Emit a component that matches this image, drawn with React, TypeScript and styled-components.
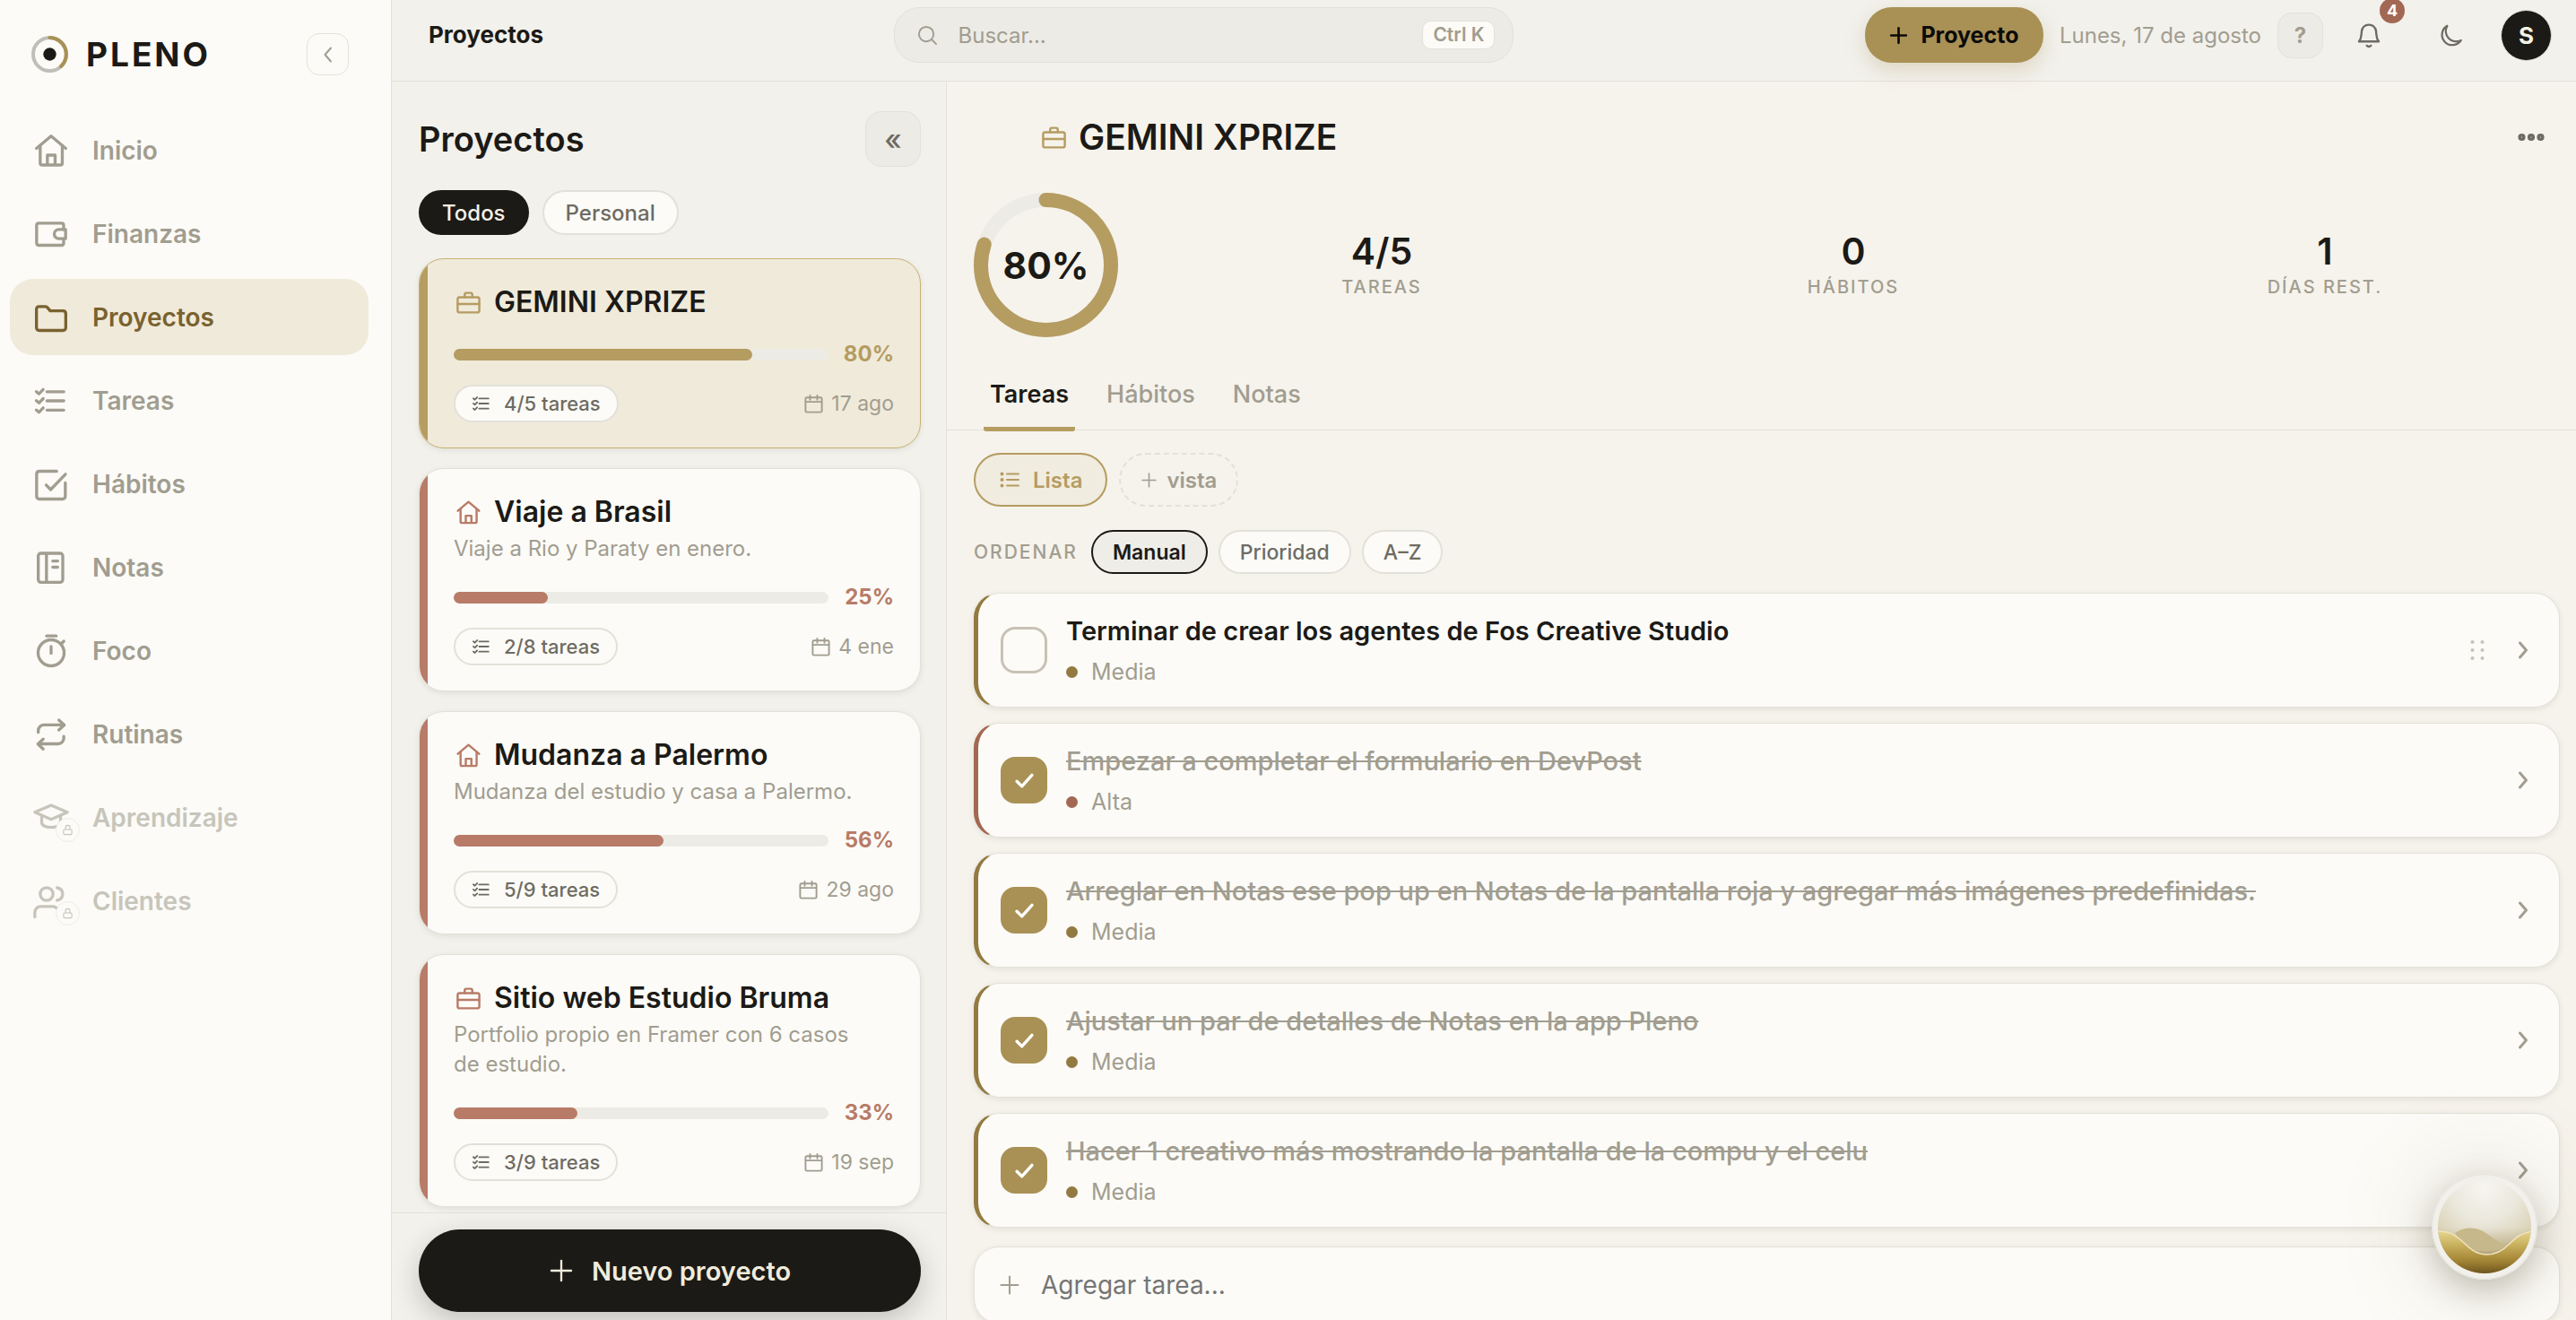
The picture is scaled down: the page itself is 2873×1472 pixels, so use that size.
import React, { useState } from "react";
import styled, { createGlobalStyle, css } from "styled-components";

const c = {
  ink: "#1c1a16",
  soft: "#6e6b62",
  muted: "#a19d90",
  line: "#e2e1d9",
  paper: "#fcfbf7",
  bar: "#f2f1ec",
  canvas: "#f6f3ec",
  well: "#edebe5",
  gold: "#a99155",
  sand: "#b59c61",
  bronze: "#927a41",
  clay: "#b87b67",
  brick: "#a26853",
};

const GlobalStyle = createGlobalStyle`
  *, *::before, *::after { box-sizing: border-box; }
  body { margin: 0; background: ${c.canvas}; color: ${c.ink}; font-family: Inter, "Noto Sans", sans-serif; }
  button, input { font-family: inherit; color: inherit; margin: 0; }
  button { cursor: pointer; border: 0; background: none; padding: 0; }
  h1, h2, h3, p, ul, dl, dd { margin: 0; padding: 0; }
  ul { list-style: none; }
`;

/* ---------- icons ---------- */

type IconName = keyof typeof shapes;

const shapes = {
  home: (
    <>
      <path d="M2.2 10.5 12 2.2l9.8 8.3" />
      <path d="M4.7 8.8v11.4c0 .8.6 1.4 1.4 1.4h12c.8 0 1.4-.6 1.4-1.4V8.8" />
      <path d="M9.5 21.3V15h5.2v6.3" />
    </>
  ),
  wallet: (
    <>
      <path d="M20.4 9V6.2c0-.9-.6-1.5-1.5-1.5H3.8c-.9 0-1.5.6-1.5 1.5v11.8c0 .9.6 1.5 1.5 1.5h15.1c.9 0 1.5-.6 1.5-1.5v-2.7" />
      <path d="M21.7 8.9h-4.5a3.1 3.1 0 0 0 0 6.2h4.5z" />
    </>
  ),
  folder: (
    <path d="M2.2 6.5c0-1 .7-1.8 1.8-1.8h4.3c.5 0 .9.2 1.2.6l1.900 2.300h8.500c1.100 0 1.900.8 1.900 1.900v9.300c0 1.100-.8 1.900-1.900 1.900H4.100c-1.100 0-1.900-.8-1.900-1.900z" />
  ),
  tasks: (
    <>
      <path d="M9.2 5.9h11.3M9.2 12h11.3M9.2 18.2h11.3" />
      <path d="m2.1 5.8 1.8 1.5 2.8-2.9M2.1 11.9l1.8 1.5 2.8-2.9M2.1 18.1l1.8 1.5 2.8-2.9" />
    </>
  ),
  habit: (
    <>
      <path d="M15.7 3.3H4.2c-1.1 0-1.9.8-1.9 1.9v14.8c0 1.1.8 1.9 1.9 1.9h15.4c1.1 0 1.9-.8 1.9-1.9v-9" />
      <path d="m8.7 12.5 3 3.1L21.6 5.3" />
    </>
  ),
  notebook: (
    <>
      <rect x="3.4" y="2.4" width="16.4" height="19.4" rx="1.8" />
      <path d="M8.9 2.6v19M13.1 7.6h3.3M13.1 11.7h3.3" />
    </>
  ),
  timer: (
    <>
      <circle cx="12" cy="13.2" r="8.7" />
      <path d="M9 1.9h6.4M12 9v4.5M18.8 7.2l1.7-1.8" />
    </>
  ),
  repeat: (
    <>
      <path d="m17.2 2.4 3.6 3.3L17.2 9" />
      <path d="M3.4 10.6V9.5c0-2.2 1.7-3.9 3.9-3.9h13.3" />
      <path d="m6.7 15.1-3.5 3.3 3.5 3.3" />
      <path d="M20.5 13.3v1.1c0 2.2-1.7 3.9-3.9 3.9H3.4" />
    </>
  ),
  cap: (
    <>
      <path d="M12 3.6 22.9 8.2 12 13 1.1 8.2z" />
      <path d="M5.7 10.4v4.7c0 2 3 3.3 6.3 3.3s6.3-1.3 6.3-3.3v-4.7" />
    </>
  ),
  users: (
    <>
      <circle cx="9" cy="7.2" r="4.3" />
      <path d="M16 3c2.3.4 3.7 2.1 3.7 4.2s-1.4 3.8-3.7 4.2" />
      <path d="M1.1 22.5v-3c0-2.3 1.8-4 4-4h7.8c2.2 0 4 1.7 4 4v3" />
    </>
  ),
  lock: (
    <>
      <rect x="3.5" y="11" width="17" height="10.5" rx="2" />
      <path d="M7.5 11V7a4.5 4.5 0 0 1 9 0v4" />
    </>
  ),
  briefcase: (
    <>
      <rect x="2" y="7" width="20" height="14" rx="1.8" />
      <path d="M8.5 6.8V4.5C8.5 3.6 9.2 3 10 3h4c.8 0 1.5.6 1.5 1.5v2.3M2.2 13.3h19.6" />
    </>
  ),
  calendar: (
    <>
      <rect x="2.5" y="4.5" width="19" height="17" rx="1.5" />
      <path d="M2.8 9.5h18.4M7.8 2v5M16.2 2v5" />
    </>
  ),
  list: (
    <>
      <path d="M9 5.5h13M9 12h13M9 18.5h13" />
      <g fill="currentColor">
        <circle cx="3.5" cy="5.5" r="1" />
        <circle cx="3.5" cy="12" r="1" />
        <circle cx="3.5" cy="18.5" r="1" />
      </g>
    </>
  ),
  plus: <path d="M12 2.5v19M2.5 12h19" />,
  search: (
    <>
      <circle cx="10.5" cy="10.5" r="8.5" />
      <path d="m17 17 5 5" />
    </>
  ),
  bell: (
    <>
      <path d="M2.5 18.2c1.5-1.7 2.1-3.5 2.3-6.3l.3-3.2C5.500 4.700 8.300 2.200 12 2.200s6.500 2.500 6.900 6.500l.3 3.200c.2 2.800.8 4.600 2.300 6.300z" />
      <path d="M10 22.2c1.1 1 2.9 1 4 0" />
    </>
  ),
  moon: <path d="M8.3 2.5A10.2 10.2 0 1 0 22 16.8 10.3 10.3 0 0 1 8.3 2.5z" />,
  left: <path d="M15 4.5 8.5 12l6.5 7.5" />,
  right: <path d="m8.5 4 7 8-7 8" />,
  check: <path d="m4.5 12.7 5 5L19.5 6.5" />,
  dots: (
    <>
      <circle cx="3" cy="12" r="2" />
      <circle cx="12" cy="12" r="2" />
      <circle cx="21" cy="12" r="2" />
    </>
  ),
  grip: (
    <g fill="currentColor" stroke="none">
      <circle cx="6.5" cy="3" r="2" />
      <circle cx="6.5" cy="12" r="2" />
      <circle cx="6.5" cy="21" r="2" />
      <circle cx="17.5" cy="3" r="2" />
      <circle cx="17.5" cy="12" r="2" />
      <circle cx="17.5" cy="21" r="2" />
    </g>
  ),
};

const Svg = styled.svg<{ $size: number }>`
  width: ${(p) => p.$size}px;
  height: ${(p) => p.$size}px;
  flex: none;
  display: block;
  overflow: visible;
  fill: none;
  stroke: currentColor;
  stroke-linecap: round;
  stroke-linejoin: round;
`;

function Icon({ name, size, weight = 2 }: { name: IconName; size: number; weight?: number }) {
  return (
    <Svg $size={size} viewBox="0 0 24 24" strokeWidth={weight} aria-hidden="true">
      {shapes[name]}
    </Svg>
  );
}

/* ---------- shell ---------- */

const Shell = styled.div`
  display: grid;
  grid-template-columns: 437px minmax(0, 1fr);
  grid-template-rows: minmax(0, 1fr);
  height: 100vh;
  overflow: hidden;
`;

const Sidebar = styled.aside`
  background: ${c.paper};
  border-right: 1px solid ${c.line};
  padding: 37px 25px 0 11px;
`;

const Brand = styled.div`
  display: flex;
  align-items: center;
  gap: 20px;
  padding: 0 22px 0 24px;
  margin-bottom: 41px;
`;

const BrandName = styled.span`
  flex: 1;
  font-size: 37px;
  line-height: 44px;
  font-weight: 700;
  letter-spacing: 3px;
`;

const Collapse = styled.button`
  display: grid;
  place-items: center;
  width: 47px;
  height: 47px;
  border: 1px solid ${c.line};
  border-radius: 14px;
  color: ${c.muted};
`;

const NavList = styled.ul`
  display: grid;
  gap: 8px;
`;

const NavLink = styled.a<{ $active?: boolean; $locked?: boolean }>`
  display: flex;
  align-items: center;
  gap: 26px;
  height: 85px;
  padding: 0 26px;
  border-radius: 26px;
  font-size: 28px;
  font-weight: 600;
  text-decoration: none;
  color: ${(p) => (p.$active ? "#79622f" : p.$locked ? "#c7c5bb" : c.muted)};
  background: ${(p) => (p.$active ? "#f0eada" : "transparent")};
`;

const NavIcon = styled.span`
  position: relative;
`;

const LockBadge = styled.span`
  position: absolute;
  right: -12px;
  bottom: -7px;
  display: grid;
  place-items: center;
  width: 27px;
  height: 27px;
  border-radius: 50%;
  border: 1px solid #edece7;
  background: ${c.paper};
`;

const Main = styled.div`
  display: grid;
  grid-template-rows: 91px minmax(0, 1fr);
  min-width: 0;
  min-height: 0;
`;

/* ---------- top bar ---------- */

const TopBar = styled.header`
  display: flex;
  align-items: center;
  justify-content: space-between;
  padding: 0 27px 12px 41px;
  background: ${c.bar};
  border-bottom: 1px solid ${c.line};
`;

const PageName = styled.h1`
  font-size: 26px;
  line-height: 32px;
  font-weight: 700;
`;

const Search = styled.label`
  display: flex;
  align-items: center;
  gap: 20px;
  width: 691px;
  height: 62px;
  padding: 0 20px 0 25px;
  border: 1px solid ${c.line};
  border-radius: 28px;
  background: ${c.well};
  color: ${c.muted};
`;

const SearchInput = styled.input`
  flex: 1;
  min-width: 0;
  border: 0;
  outline: 0;
  background: none;
  font-size: 24px;
  &::placeholder {
    color: ${c.muted};
    opacity: 1;
  }
`;

const Key = styled.kbd`
  padding: 0 11px;
  border: 1px solid ${c.line};
  border-radius: 10px;
  background: ${c.paper};
  font-family: inherit;
  font-size: 21px;
  line-height: 30px;
  font-weight: 600;
`;

const Tools = styled.div`
  display: flex;
  align-items: center;
  gap: 18px;
`;

const CreateButton = styled.button`
  display: flex;
  align-items: center;
  justify-content: center;
  gap: 14px;
  width: 199px;
  height: 62px;
  border-radius: 30px;
  background: ${c.gold};
  color: #0c0b09;
  font-size: 25px;
  font-weight: 700;
  box-shadow: 0 8px 22px rgba(169, 145, 85, 0.28);
`;

const Today = styled.time`
  font-size: 24px;
  color: ${c.muted};
`;

const ToolButton = styled.button<{ $boxed?: boolean }>`
  position: relative;
  display: grid;
  place-items: center;
  width: 51px;
  height: 51px;
  border-radius: 16px;
  color: ${c.soft};
  font-size: 24px;
  font-weight: 700;
  ${(p) =>
    p.$boxed &&
    css`
      border: 1px solid ${c.line};
      background: ${c.well};
      color: ${c.muted};
    `}
`;

const IconTools = styled.div`
  display: flex;
  align-items: center;
  gap: 41px;
  margin: 0 12px 0 7px;
`;

const Count = styled.span`
  position: absolute;
  right: -15px;
  top: -16px;
  width: 28px;
  height: 28px;
  border-radius: 50%;
  background: ${c.brick};
  color: #fff;
  font-size: 18px;
  line-height: 28px;
  text-align: center;
`;

const Avatar = styled.button`
  width: 57px;
  height: 57px;
  border-radius: 50%;
  border: 1px solid ${c.line};
  background: ${c.ink};
  color: #f5f2e6;
  font-size: 26px;
  font-weight: 700;
`;

/* ---------- project column ---------- */

const Body = styled.div`
  display: grid;
  grid-template-columns: 619px minmax(0, 1fr);
  grid-template-rows: minmax(0, 1fr);
  min-height: 0;
`;

const Column = styled.section`
  display: flex;
  flex-direction: column;
  min-height: 0;
  background: ${c.bar};
  border-right: 1px solid ${c.line};
`;

const ColumnHead = styled.div`
  display: flex;
  align-items: center;
  justify-content: space-between;
  padding: 33px 28px 26px 30px;
`;

const ColumnTitle = styled.h2`
  font-size: 38px;
  line-height: 48px;
  font-weight: 600;
`;

const FoldButton = styled.button`
  width: 62px;
  height: 62px;
  border: 1px solid ${c.line};
  border-radius: 18px;
  background: ${c.well};
  color: ${c.soft};
  font-size: 32px;
  font-weight: 500;
`;

const Filters = styled.div`
  display: flex;
  gap: 15px;
  padding: 0 30px 26px;
`;

const Filter = styled.button<{ $on?: boolean }>`
  height: 50px;
  padding: 0 24px;
  border-radius: 25px;
  border: 2px solid ${(p) => (p.$on ? c.ink : c.line)};
  background: ${(p) => (p.$on ? c.ink : c.paper)};
  color: ${(p) => (p.$on ? "#f5f2e6" : c.soft)};
  font-size: 24px;
  font-weight: 500;
`;

const Cards = styled.ul`
  flex: 1;
  min-height: 0;
  overflow: hidden;
  display: flex;
  flex-direction: column;
  gap: 22px;
  padding: 0 28px 0 30px;
`;

const Card = styled.li<{ $tone: string; $active?: boolean }>`
  position: relative;
  flex: none;
  overflow: hidden;
  padding: 28px 29px 28px 38px;
  border: 1px solid ${(p) => (p.$active ? "#c6b171" : c.line)};
  border-radius: 28px;
  background: ${(p) => (p.$active ? "#f0eada" : c.paper)};
  box-shadow: 0 2px 6px rgba(60, 55, 40, 0.1);
  &::before {
    content: "";
    position: absolute;
    inset: 0 auto 0 0;
    width: 9px;
    background: ${(p) => p.$tone};
  }
`;

const CardTitle = styled.h3<{ $tone: string }>`
  display: flex;
  align-items: center;
  gap: 14px;
  padding-left: 2px;
  font-size: 32px;
  line-height: 40px;
  font-weight: 600;
  svg {
    color: ${(p) => p.$tone};
  }
`;

const CardNote = styled.p`
  margin-top: 4px;
  padding-right: 20px;
  font-size: 24px;
  line-height: 33px;
  color: ${c.muted};
`;

const Progress = styled.div<{ $tone: string }>`
  display: flex;
  align-items: center;
  gap: 18px;
  margin-top: 22px;
  font-size: 24px;
  line-height: 32px;
  font-weight: 700;
  color: ${(p) => p.$tone};
`;

const Track = styled.div`
  flex: 1;
  height: 13px;
  border-radius: 7px;
  background: ${c.well};
`;

const Fill = styled.div`
  height: 100%;
  border-radius: 7px;
  background: currentColor;
`;

const CardFoot = styled.div`
  display: flex;
  align-items: center;
  justify-content: space-between;
  margin-top: 18px;
`;

const TaskCount = styled.span`
  display: flex;
  align-items: center;
  gap: 14px;
  height: 42px;
  padding: 0 18px;
  border: 2px solid ${c.line};
  border-radius: 21px;
  background: ${c.paper};
  color: ${c.soft};
  font-size: 22px;
  font-weight: 500;
`;

const Due = styled.span`
  display: flex;
  align-items: center;
  gap: 8px;
  font-size: 23px;
  color: ${c.muted};
`;

const ColumnFoot = styled.div`
  padding: 18px 28px 9px 30px;
  border-top: 1px solid ${c.line};
`;

const NewProject = styled.button`
  display: flex;
  align-items: center;
  justify-content: center;
  gap: 20px;
  width: 100%;
  height: 92px;
  border-radius: 46px;
  background: ${c.ink};
  color: #f0ecdc;
  font-size: 29px;
  font-weight: 600;
  box-shadow: 0 10px 30px rgba(28, 26, 22, 0.22);
`;

/* ---------- project detail ---------- */

const Detail = styled.main`
  display: flex;
  flex-direction: column;
  min-width: 0;
  min-height: 0;
  overflow: hidden;
  & > * {
    flex: none;
  }
`;

const DetailHead = styled.div`
  display: flex;
  align-items: center;
  gap: 13px;
  padding: 36px 36px 0 105px;
  color: ${c.sand};
`;

const DetailTitle = styled.h2`
  flex: 1;
  font-size: 39px;
  line-height: 52px;
  font-weight: 600;
  color: ${c.ink};
`;

const MoreButton = styled.button`
  color: ${c.soft};
`;

const Summary = styled.div`
  display: grid;
  grid-template-columns: 161px minmax(0, 1fr);
  gap: 31px;
  align-items: center;
  padding: 36px 17px 0 30px;
`;

const Ring = styled.div`
  display: grid;
  place-items: center;
  & > * {
    grid-area: 1 / 1;
  }
`;

const RingValue = styled.strong`
  font-size: 41px;
  line-height: 48px;
  font-weight: 700;
`;

const Stats = styled.dl`
  display: grid;
  grid-template-columns: repeat(3, minmax(0, 1fr));
  padding-bottom: 4px;
  text-align: center;
`;

const Stat = styled.div`
  display: flex;
  flex-direction: column-reverse;
`;

const StatLabel = styled.dt`
  font-size: 20px;
  line-height: 28px;
  font-weight: 500;
  letter-spacing: 2px;
  color: ${c.muted};
`;

const StatValue = styled.dd`
  font-size: 41px;
  line-height: 52px;
  font-weight: 600;
`;

const Tabs = styled.div`
  display: flex;
  gap: 28px;
  margin-top: 28px;
  padding: 0 41px;
  border-bottom: 1px solid ${c.line};
`;

const Tab = styled.button<{ $on?: boolean }>`
  height: 77px;
  margin-bottom: -2px;
  padding: 0 7px 1px;
  border-bottom: 5px solid ${(p) => (p.$on ? c.sand : "transparent")};
  border-radius: 3px;
  font-size: 27px;
  font-weight: ${(p) => (p.$on ? 600 : 500)};
  color: ${(p) => (p.$on ? c.ink : c.muted)};
`;

const Views = styled.div`
  display: flex;
  gap: 13px;
  padding: 25px 30px 0;
`;

const View = styled.button<{ $on?: boolean }>`
  display: flex;
  align-items: center;
  gap: ${(p) => (p.$on ? 14 : 10)}px;
  height: 60px;
  padding: 0 ${(p) => (p.$on ? 26 : 22)}px;
  border-radius: 30px;
  border: 2px ${(p) => (p.$on ? `solid ${c.sand}` : `dashed ${c.line}`)};
  background: ${(p) => (p.$on ? "#f1ece0" : "transparent")};
  color: ${(p) => (p.$on ? c.sand : c.muted)};
  font-size: 24px;
  font-weight: 600;
`;

const Sort = styled.div`
  display: flex;
  align-items: center;
  gap: 12px;
  padding: 26px 30px 0;
`;

const SortLabel = styled.span`
  padding-right: 3px;
  font-size: 21px;
  font-weight: 500;
  letter-spacing: 2px;
  color: ${c.muted};
`;

const SortButton = styled.button<{ $on?: boolean }>`
  height: 49px;
  padding: 0 22px;
  border: 2px solid ${(p) => (p.$on ? c.ink : c.line)};
  border-radius: 25px;
  background: ${(p) => (p.$on ? "#efede7" : c.paper)};
  color: ${(p) => (p.$on ? c.ink : c.soft)};
  font-size: 23px;
  font-weight: ${(p) => (p.$on ? 600 : 500)};
`;

const Tasks = styled.ul`
  display: grid;
  gap: 17px;
  padding: 21px 18px 0 30px;
`;

const Task = styled.li<{ $tone: string }>`
  display: flex;
  align-items: center;
  gap: 21px;
  height: 128px;
  padding: 0 28px 0 25px;
  border: 1px solid ${c.line};
  border-left: 5px solid ${(p) => p.$tone};
  border-radius: 28px;
  background: ${c.paper};
  box-shadow: 0 2px 6px rgba(60, 55, 40, 0.1);
`;

const Tick = styled.span`
  display: grid;
  place-items: center;
  color: #fff;
  & > * {
    grid-area: 1 / 1;
  }
  svg {
    pointer-events: none;
  }
`;

const TickBox = styled.input`
  appearance: none;
  width: 52px;
  height: 52px;
  border: 3px solid #c8c2b5;
  border-radius: 16px;
  background: ${c.paper};
  &:checked {
    border-color: ${c.gold};
    background: ${c.gold};
  }
`;

const TaskText = styled.div`
  flex: 1;
  min-width: 0;
`;

const TaskName = styled.label<{ $done?: boolean }>`
  display: block;
  font-size: 29px;
  line-height: 38px;
  font-weight: ${(p) => (p.$done ? 500 : 600)};
  color: ${(p) => (p.$done ? c.muted : c.ink)};
  text-decoration: ${(p) => (p.$done ? "line-through" : "none")};
`;

const Priority = styled.p<{ $tone: string }>`
  display: flex;
  align-items: center;
  gap: 15px;
  margin-top: 10px;
  font-size: 25px;
  line-height: 32px;
  color: ${c.muted};
  &::before {
    content: "";
    width: 13px;
    height: 13px;
    border-radius: 50%;
    background: ${(p) => p.$tone};
  }
`;

const RowActions = styled.div`
  display: flex;
  align-items: center;
  gap: 27px;
`;

const RowButton = styled.button<{ $faint?: boolean }>`
  color: ${(p) => (p.$faint ? "#c6c3b7" : c.muted)};
`;

const AddTask = styled.label`
  display: flex;
  align-items: center;
  gap: 21px;
  height: 86px;
  margin: 21px 18px 0 30px;
  padding: 0 27px;
  border: 1px solid ${c.line};
  border-radius: 28px;
  background: ${c.paper};
  color: ${c.muted};
  box-shadow: 0 2px 6px rgba(60, 55, 40, 0.1);
`;

const AddInput = styled.input`
  flex: 1;
  border: 0;
  outline: 0;
  background: none;
  font-size: 28px;
  &::placeholder {
    color: #757575;
    opacity: 1;
  }
`;

const Orb = styled.button`
  position: fixed;
  right: 43px;
  bottom: 45px;
  width: 118px;
  height: 118px;
  border-radius: 50%;
  box-shadow: 0 12px 36px rgba(70, 60, 35, 0.28), 0 0 110px rgba(120, 110, 70, 0.22);
`;

/* ---------- data ---------- */

const nav: { icon: IconName; label: string; active?: boolean; locked?: boolean }[] = [
  { icon: "home", label: "Inicio" },
  { icon: "wallet", label: "Finanzas" },
  { icon: "folder", label: "Proyectos", active: true },
  { icon: "tasks", label: "Tareas" },
  { icon: "habit", label: "Hábitos" },
  { icon: "notebook", label: "Notas" },
  { icon: "timer", label: "Foco" },
  { icon: "repeat", label: "Rutinas" },
  { icon: "cap", label: "Aprendizaje", locked: true },
  { icon: "users", label: "Clientes", locked: true },
];

const projects: {
  icon: IconName;
  name: string;
  note?: string;
  done: number;
  total: number;
  due: string;
  tone: string;
  active?: boolean;
}[] = [
  { icon: "briefcase", name: "GEMINI XPRIZE", done: 4, total: 5, due: "17 ago", tone: c.sand, active: true },
  { icon: "home", name: "Viaje a Brasil", note: "Viaje a Rio y Paraty en enero.", done: 2, total: 8, due: "4 ene", tone: c.clay },
  { icon: "home", name: "Mudanza a Palermo", note: "Mudanza del estudio y casa a Palermo.", done: 5, total: 9, due: "29 ago", tone: c.clay },
  { icon: "briefcase", name: "Sitio web Estudio Bruma", note: "Portfolio propio en Framer con 6 casos de estudio.", done: 3, total: 9, due: "19 sep", tone: c.clay },
];

const initialTasks = [
  { name: "Terminar de crear los agentes de Fos Creative Studio", priority: "Media", done: false },
  { name: "Empezar a completar el formulario en DevPost", priority: "Alta", done: true },
  { name: "Arreglar en Notas ese pop up en Notas de la pantalla roja y agregar más imágenes predefinidas.", priority: "Media", done: true },
  { name: "Ajustar un par de detalles de Notas en la app Pleno", priority: "Media", done: true },
  { name: "Hacer 1 creativo más mostrando la pantalla de la compu y el celu", priority: "Media", done: true },
];

const stats = [
  { value: "4/5", label: "TAREAS" },
  { value: "0", label: "HÁBITOS" },
  { value: "1", label: "DÍAS REST." },
];

/* ---------- pieces ---------- */

function Logo() {
  return (
    <Svg $size={41} viewBox="0 0 41 41" strokeWidth={4} aria-hidden="true">
      <circle cx="20.5" cy="20.5" r="18.5" stroke="#bfbeb8" />
      <path d="M20.5 2a18.5 18.5 0 0 1 12.5 32" stroke={c.gold} />
      <circle cx="20.5" cy="20.5" r="7.2" fill={c.ink} stroke="none" />
    </Svg>
  );
}

function ProjectCard({ project }: { project: (typeof projects)[number] }) {
  const percent = Math.round((project.done / project.total) * 100);
  return (
    <Card $tone={project.tone} $active={project.active}>
      <CardTitle $tone={project.tone}>
        <Icon name={project.icon} size={29} />
        {project.name}
      </CardTitle>
      {project.note && <CardNote>{project.note}</CardNote>}
      <Progress $tone={project.tone}>
        <Track role="progressbar" aria-label={project.name} aria-valuenow={percent}>
          <Fill style={{ width: `${percent}%` }} />
        </Track>
        {percent}%
      </Progress>
      <CardFoot>
        <TaskCount>
          <Icon name="tasks" size={22} />
          {project.done}/{project.total} tareas
        </TaskCount>
        <Due>
          <Icon name="calendar" size={23} />
          {project.due}
        </Due>
      </CardFoot>
    </Card>
  );
}

function CompletionRing() {
  const length = 2 * Math.PI * 72.5;
  return (
    <Ring>
      <Svg $size={161} viewBox="0 0 161 161" strokeWidth={16} aria-hidden="true">
        <circle cx="80.5" cy="80.5" r="72.5" stroke={c.well} />
        <circle
          cx="80.5"
          cy="80.5"
          r="72.5"
          stroke={c.sand}
          strokeDasharray={`${length * 0.8} ${length}`}
          transform="rotate(-90 80.5 80.5)"
        />
      </Svg>
      <RingValue>80%</RingValue>
    </Ring>
  );
}

function OrbDrawing() {
  return (
    <Svg $size={118} viewBox="0 0 118 118" aria-hidden="true">
      <defs>
        <radialGradient id="glass" cx="50%" cy="8%" r="75%">
          <stop offset="0" stopColor="#f7f5f0" />
          <stop offset="0.5" stopColor="#eae7db" />
          <stop offset="1" stopColor="#d6ccac" />
        </radialGradient>
        <linearGradient id="liquid" x1="0" y1="0" x2="0" y2="1">
          <stop offset="0" stopColor="#e6d590" />
          <stop offset="0.3" stopColor="#c8b05d" />
          <stop offset="0.65" stopColor="#a18233" />
          <stop offset="1" stopColor="#5c4519" />
        </linearGradient>
        <linearGradient id="shade" x1="0" y1="0" x2="0" y2="1">
          <stop offset="0" stopColor="#a99765" stopOpacity="0" />
          <stop offset="1" stopColor="#9b8755" stopOpacity="0.7" />
        </linearGradient>
        <clipPath id="bowl">
          <circle cx="59" cy="59" r="52" />
        </clipPath>
      </defs>
      <circle cx="59" cy="59" r="58.5" fill="#f2f0eb" stroke="#e3e0d8" strokeWidth="1" />
      <g clipPath="url(#bowl)" stroke="none">
        <rect x="7" y="7" width="104" height="104" fill="url(#glass)" />
        <rect x="7" y="60" width="104" height="34" fill="url(#shade)" />
        <path d="M26 66C36 59 48 59 57 64s16 12 26 16c-10 9-40 9-50-3z" fill="#c6b88a" />
        <path
          d="M6 64c13-1 20 4 29 12 9 9 16 14 27 14 11 0 18-5 25-12 8-8 13-12 25-14v52H6z"
          fill="url(#liquid)"
        />
        <path
          d="M6 64c13-1 20 4 29 12 9 9 16 14 27 14 11 0 18-5 25-12 8-8 13-12 25-14"
          fill="none"
          stroke="#efe3bd"
          strokeWidth="1.5"
        />
      </g>
    </Svg>
  );
}

export default function App() {
  const [tasks, setTasks] = useState(initialTasks);
  const toggle = (index: number) =>
    setTasks((all) => all.map((t, i) => (i === index ? { ...t, done: !t.done } : t)));

  return (
    <Shell>
      <GlobalStyle />
      <Sidebar>
        <Brand>
          <Logo />
          <BrandName>PLENO</BrandName>
          <Collapse aria-label="Contraer menú">
            <Icon name="left" size={24} />
          </Collapse>
        </Brand>
        <nav aria-label="Principal">
          <NavList>
            {nav.map((item) => (
              <li key={item.label}>
                <NavLink href="#" $active={item.active} $locked={item.locked}>
                  <NavIcon>
                    <Icon name={item.icon} size={40} />
                    {item.locked && (
                      <LockBadge>
                        <Icon name="lock" size={13} />
                      </LockBadge>
                    )}
                  </NavIcon>
                  {item.label}
                </NavLink>
              </li>
            ))}
          </NavList>
        </nav>
      </Sidebar>

      <Main>
        <TopBar>
          <PageName>Proyectos</PageName>
          <Search>
            <Icon name="search" size={23} />
            <SearchInput type="search" placeholder="Buscar..." aria-label="Buscar" />
            <Key>Ctrl K</Key>
          </Search>
          <Tools>
            <CreateButton>
              <Icon name="plus" size={21} weight={3} />
              Proyecto
            </CreateButton>
            <Today>Lunes, 17 de agosto</Today>
            <ToolButton $boxed>?</ToolButton>
            <IconTools>
              <ToolButton aria-label="Notificaciones">
                <Icon name="bell" size={28} />
                <Count>4</Count>
              </ToolButton>
              <ToolButton aria-label="Modo oscuro">
                <Icon name="moon" size={27} />
              </ToolButton>
            </IconTools>
            <Avatar>S</Avatar>
          </Tools>
        </TopBar>

        <Body>
          <Column>
            <ColumnHead>
              <ColumnTitle>Proyectos</ColumnTitle>
              <FoldButton>«</FoldButton>
            </ColumnHead>
            <Filters>
              <Filter $on>Todos</Filter>
              <Filter>Personal</Filter>
            </Filters>
            <Cards>
              {projects.map((project) => (
                <ProjectCard key={project.name} project={project} />
              ))}
            </Cards>
            <ColumnFoot>
              <NewProject>
                <Icon name="plus" size={28} />
                Nuevo proyecto
              </NewProject>
            </ColumnFoot>
          </Column>

          <Detail>
            <DetailHead>
              <Icon name="briefcase" size={29} />
              <DetailTitle>GEMINI XPRIZE</DetailTitle>
              <MoreButton aria-label="Más opciones">
                <Icon name="dots" size={28} weight={3} />
              </MoreButton>
            </DetailHead>

            <Summary>
              <CompletionRing />
              <Stats>
                {stats.map((s) => (
                  <Stat key={s.label}>
                    <StatLabel>{s.label}</StatLabel>
                    <StatValue>{s.value}</StatValue>
                  </Stat>
                ))}
              </Stats>
            </Summary>

            <Tabs role="tablist">
              <Tab role="tab" aria-selected $on>Tareas</Tab>
              <Tab role="tab" aria-selected={false}>Hábitos</Tab>
              <Tab role="tab" aria-selected={false}>Notas</Tab>
            </Tabs>

            <Views>
              <View $on>
                <Icon name="list" size={24} />
                Lista
              </View>
              <View>
                <Icon name="plus" size={19} />
                vista
              </View>
            </Views>

            <Sort>
              <SortLabel>ORDENAR</SortLabel>
              <SortButton $on>Manual</SortButton>
              <SortButton>Prioridad</SortButton>
              <SortButton>A–Z</SortButton>
            </Sort>

            <Tasks>
              {tasks.map((task, i) => {
                const tone = task.priority === "Alta" ? c.brick : c.bronze;
                return (
                  <Task key={task.name} $tone={tone}>
                    <Tick>
                      <TickBox type="checkbox" id={`task-${i}`} checked={task.done} onChange={() => toggle(i)} />
                      {task.done && <Icon name="check" size={27} weight={3} />}
                    </Tick>
                    <TaskText>
                      <TaskName htmlFor={`task-${i}`} $done={task.done}>{task.name}</TaskName>
                      <Priority $tone={tone}>{task.priority}</Priority>
                    </TaskText>
                    <RowActions>
                      {i === 0 && (
                        <RowButton $faint aria-label="Reordenar">
                          <Icon name="grip" size={24} />
                        </RowButton>
                      )}
                      <RowButton aria-label="Abrir tarea">
                        <Icon name="right" size={24} weight={3} />
                      </RowButton>
                    </RowActions>
                  </Task>
                );
              })}
            </Tasks>

            <AddTask>
              <Icon name="plus" size={24} />
              <AddInput placeholder="Agregar tarea..." aria-label="Agregar tarea" />
            </AddTask>
          </Detail>
        </Body>
      </Main>

      <Orb aria-label="Asistente">
        <OrbDrawing />
      </Orb>
    </Shell>
  );
}
